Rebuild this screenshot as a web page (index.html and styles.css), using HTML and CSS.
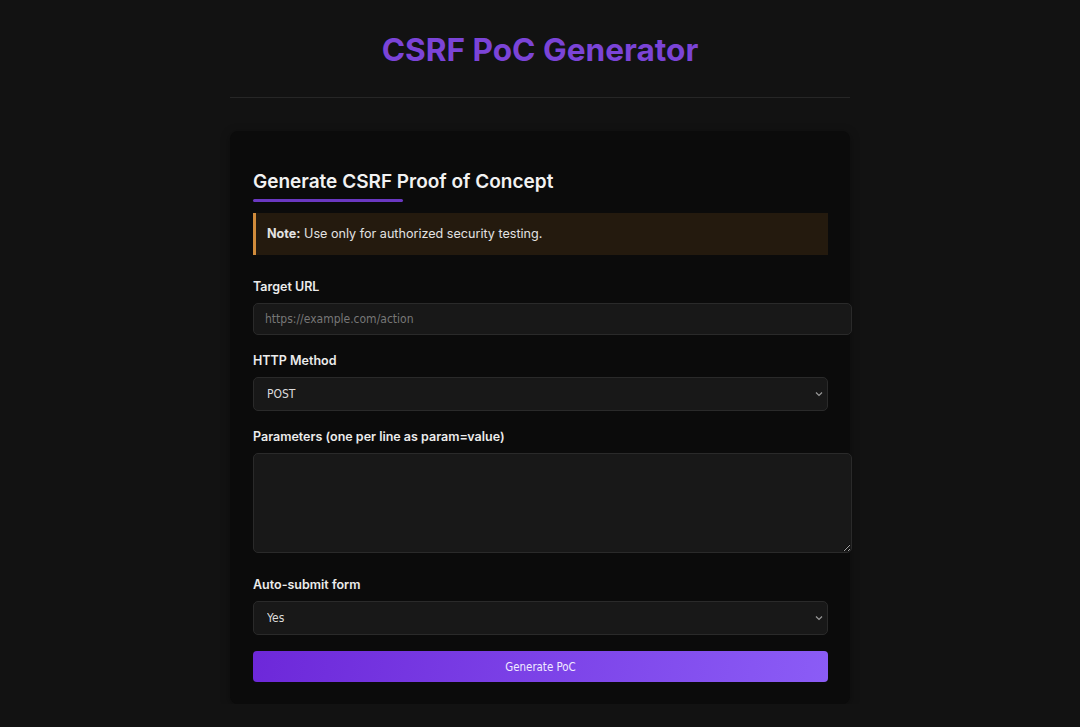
FILE: index.html
```html
<!DOCTYPE html>
<html lang="en">
<head>
<meta charset="utf-8">
<title>CSRF PoC Generator</title>
<link rel="stylesheet" href="styles.css">
</head>
<body>
<div class="container">
  <header class="header">
    <h1>CSRF PoC Generator</h1>
  </header>
  <main class="card">
    <h2 class="card-title">Generate CSRF Proof of Concept</h2>
    <div class="note"><strong>Note:</strong> Use only for authorized security testing.</div>
    <form class="form">
      <div class="group">
        <label class="label" for="url">Target URL</label>
        <input class="input" id="url" type="text" placeholder="https://example.com/action">
      </div>
      <div class="group">
        <label class="label" for="method">HTTP Method</label>
        <select class="select" id="method">
          <option>POST</option>
          <option>GET</option>
        </select>
      </div>
      <div class="group group-tall">
        <label class="label" for="params">Parameters (one per line as param=value)</label>
        <textarea class="textarea" id="params"></textarea>
      </div>
      <div class="group">
        <label class="label" for="auto">Auto-submit form</label>
        <select class="select" id="auto">
          <option>Yes</option>
          <option>No</option>
        </select>
      </div>
      <button class="button" type="button">Generate PoC</button>
    </form>
  </main>
</div>
</body>
</html>
```
FILE: styles.css
```css
* { box-sizing: content-box; }
html, body { margin: 0; padding: 0; }
body {
  background: #121212;
  color: #e6e6e6;
  font-family: Inter, "Noto Sans", sans-serif;
}
.container {
  width: 620px;
  margin: 0 auto;
}
.header {
  border-bottom: 1px solid #262626;
  padding: 28px 0 25px;
  text-align: center;
}
.header h1 {
  margin: 0;
  font-size: 31.6px;
  line-height: 44px;
  font-weight: 700;
  color: #7b44d7;
}
.card {
  display: block;
  margin-top: 33px;
  background: #0b0b0b;
  border-radius: 8px;
  padding: 23px 22px 22px 23px;
  width: 575px;
  box-shadow: 0 2px 10px rgba(0,0,0,0.35);
}
.card-title {
  position: relative;
  margin: 16px 0 11px;
  padding-bottom: 8px;
  font-size: 19px;
  line-height: 24px;
  font-weight: 600;
  color: #f2f2f2;
}
.card-title::after {
  content: "";
  position: absolute;
  left: 0;
  bottom: 0;
  width: 150px;
  height: 3px;
  background: #6a38c2;
  border-radius: 2px;
}
.note {
  background: #241a0e;
  border-left: 3px solid #d08b3b;
  padding: 12px 12px 12px 11px;
  font-size: 12.6px;
  line-height: 18px;
  color: #e2e2e2;
  margin-bottom: 24px;
}
.note strong { font-weight: 700; }
.group { margin-bottom: 18px; }
.group-tall { margin-bottom: 24px; }
.label {
  display: block;
  font-size: 12.5px;
  line-height: 16px;
  font-weight: 600;
  color: #ececec;
  margin-bottom: 8px;
}
.input, .textarea, .select {
  font-family: "DejaVu Sans Condensed", sans-serif;
  font-size: 12px;
}
.input, .textarea {
  display: block;
  width: 100%;
  padding: 7px 11px;
  background: #181818;
  border: 1px solid #2a2a2a;
  border-radius: 5px;
  color: #ddd;
  margin: 0;
}
.input { height: 16px; }
.input::placeholder { color: #777; }
.textarea {
  height: 84px;
  resize: vertical;
}
.select {
  display: block;
  box-sizing: border-box;
  width: 100%;
  height: 34px;
  padding: 0 13px;
  background: #181818 url("data:image/svg+xml,%3Csvg xmlns='http://www.w3.org/2000/svg' width='8' height='6' viewBox='0 0 8 6'%3E%3Cpath d='M1 1.5l3 3 3-3' fill='none' stroke='%23999' stroke-width='1.2'/%3E%3C/svg%3E") no-repeat right 4px center;
  -webkit-appearance: none;
  appearance: none;
  border: 1px solid #2a2a2a;
  border-radius: 5px;
  color: #dcdcdc;
  margin: 0;
}
.button {
  display: block;
  box-sizing: border-box;
  width: 100%;
  height: 31px;
  margin-top: -2px;
  border: none;
  border-radius: 4px;
  background: linear-gradient(100deg, #6d28d9, #8b5cf6);
  color: #f0eaff;
  font-family: "DejaVu Sans Condensed", sans-serif;
  font-size: 11.4px;
  cursor: pointer;
}
```
